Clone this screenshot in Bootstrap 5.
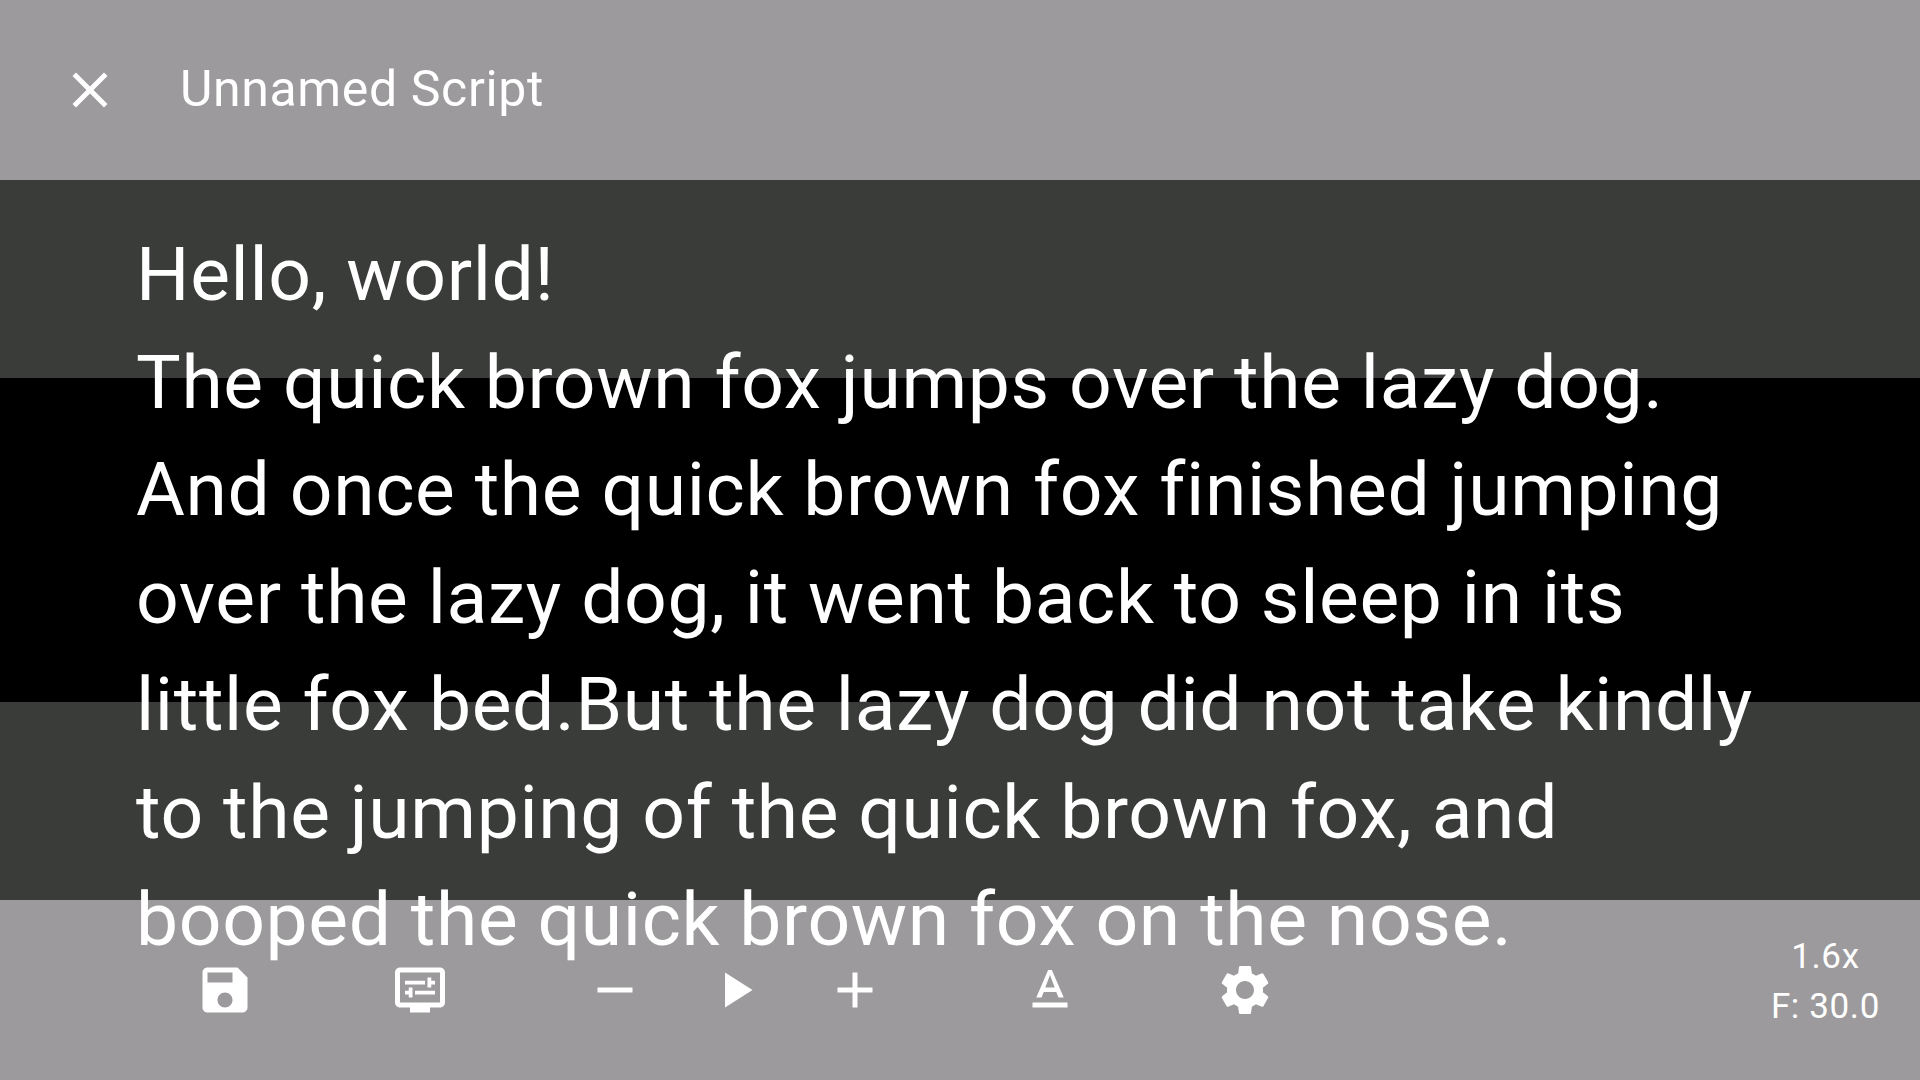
<!DOCTYPE html>
<html lang="en">
<head>
<meta charset="utf-8">
<meta name="viewport" content="width=device-width, initial-scale=1">
<title>Unnamed Script</title>
<link href="https://cdn.jsdelivr.net/npm/bootstrap@5.3.0/dist/css/bootstrap.min.css" rel="stylesheet">
<style>
  body { font-family: Roboto, sans-serif; letter-spacing: .625px; background: #000; color: #fff; }
  .prompter-bar { height: 180px; background: #9c9a9c; }
  .prompter-top { padding-left: 60px; gap: 30px; }
  .prompter-title { font-size: 50px; line-height: 60px; padding: 0 0 2px 30px; }
  .shade { background: #3a3c39; height: 198px; }
  .script-text { top: 221px; left: 136px; font-size: 75px; line-height: 107.5px; white-space: nowrap; }
  .tool { width: 60px; height: 60px; padding: 0; border: 0; background: none; color: #fff; display: block; }
  .tool svg { display: block; width: 60px; height: 60px; fill: currentColor; }
  .tools { padding-left: 195px; gap: 135px; }
  .speed { gap: 60px; }
  .readout { font-size: 35px; line-height: 50px; margin-right: 40px; padding-bottom: 17px; }
</style>
</head>
<body class="vh-100 overflow-hidden">
<main class="position-relative d-flex flex-column vh-100">
  <header class="prompter-bar prompter-top d-flex align-items-center flex-shrink-0">
    <button class="tool" type="button" aria-label="Close"><svg viewBox="0 0 24 24"><path d="M19 6.41 17.59 5 12 10.59 6.41 5 5 6.41 10.59 12 5 17.59 6.41 19 12 13.41 17.59 19 19 17.59 13.41 12z"/></svg></button>
    <h1 class="prompter-title fw-normal m-0">Unnamed Script</h1>
  </header>
  <div class="shade flex-shrink-0"></div>
  <div class="flex-grow-1"></div>
  <div class="shade flex-shrink-0"></div>
  <footer class="prompter-bar d-flex align-items-center justify-content-between flex-shrink-0">
    <div class="tools d-flex align-items-center">
      <button class="tool" type="button" aria-label="Save"><svg viewBox="0 0 24 24"><path d="M17 3H5c-1.11 0-2 .9-2 2v14c0 1.1.89 2 2 2h14c1.1 0 2-.9 2-2V7l-4-4zm-5 16c-1.66 0-3-1.34-3-3s1.34-3 3-3 3 1.34 3 3-1.34 3-3 3zm3-10H5V5h10v4z"/></svg></button>
      <button class="tool" type="button" aria-label="Display settings"><svg viewBox="0 0 24 24"><path d="M20 3H4c-1.1 0-2 .9-2 2v12c0 1.1.9 2 2 2h4v2h8v-2h4c1.1 0 2-.9 2-2V5c0-1.1-.9-2-2-2zm0 14H4V5h16v12z"/><path d="M6 8.25h8v1.5H6zM16.5 9.75H18v-1.5h-1.5V7H15v4h1.5zM10 12.25h8v1.5h-8zM7.5 15H9v-4H7.5v1.25H6v1.5h1.5z"/></svg></button>
      <div class="speed d-flex">
        <button class="tool" type="button" aria-label="Slower"><svg viewBox="0 0 24 24"><path d="M19 13H5v-2h14v2z"/></svg></button>
        <button class="tool" type="button" aria-label="Play"><svg viewBox="0 0 24 24"><path d="M8 5v14l11-7z"/></svg></button>
        <button class="tool" type="button" aria-label="Faster"><svg viewBox="0 0 24 24"><path d="M19 13h-6v6h-2v-6H5v-2h6V5h2v6h6v2z"/></svg></button>
      </div>
      <button class="tool" type="button" aria-label="Text format"><svg viewBox="0 0 24 24"><path d="M5 17v2h14v-2H5zm4.5-4.2h5l.9 2.2h2.1L12.75 4h-1.5L6.5 15h2.1l.9-2.2zM12 5.98 13.87 11h-3.74L12 5.98z"/></svg></button>
      <button class="tool" type="button" aria-label="Settings"><svg viewBox="0 0 24 24"><path d="M19.14 12.94c.04-.3.06-.61.06-.94 0-.32-.02-.64-.07-.94l2.03-1.58c.18-.14.23-.41.12-.61l-1.92-3.32c-.12-.22-.37-.29-.59-.22l-2.39.96c-.5-.38-1.03-.7-1.62-.94l-.36-2.54c-.04-.24-.24-.41-.48-.41h-3.84c-.24 0-.43.17-.47.41l-.36 2.54c-.59.24-1.13.57-1.62.94l-2.39-.96c-.22-.08-.47 0-.59.22L2.74 8.87c-.12.21-.08.47.12.61l2.03 1.58c-.05.3-.09.63-.09.94s.02.64.07.94l-2.03 1.58c-.18.14-.23.41-.12.61l1.92 3.32c.12.22.37.29.59.22l2.39-.96c.5.38 1.03.7 1.62.94l.36 2.54c.05.24.24.41.48.41h3.84c.24 0 .44-.17.47-.41l.36-2.54c.59-.24 1.13-.56 1.62-.94l2.39.96c.22.08.47 0 .59-.22l1.92-3.32c.12-.22.07-.47-.12-.61l-2.01-1.58zM12 15.6c-1.98 0-3.6-1.62-3.6-3.6s1.62-3.6 3.6-3.6 3.6 1.62 3.6 3.6-1.62 3.6-3.6 3.6z"/></svg></button>
    </div>
    <div class="readout text-center">
      <div>1.6x</div>
      <div>F: 30.0</div>
    </div>
  </footer>
  <div class="script-text position-absolute">Hello, world!<br>The quick brown fox jumps over the lazy dog.<br>And once the quick brown fox finished jumping<br>over the lazy dog, it went back to sleep in its<br>little fox bed.But the lazy dog did not take kindly<br>to the jumping of the quick brown fox, and<br>booped the quick brown fox on the nose.</div>
</main>
<script src="https://cdn.jsdelivr.net/npm/bootstrap@5.3.0/dist/js/bootstrap.bundle.min.js"></script>
</body>
</html>
